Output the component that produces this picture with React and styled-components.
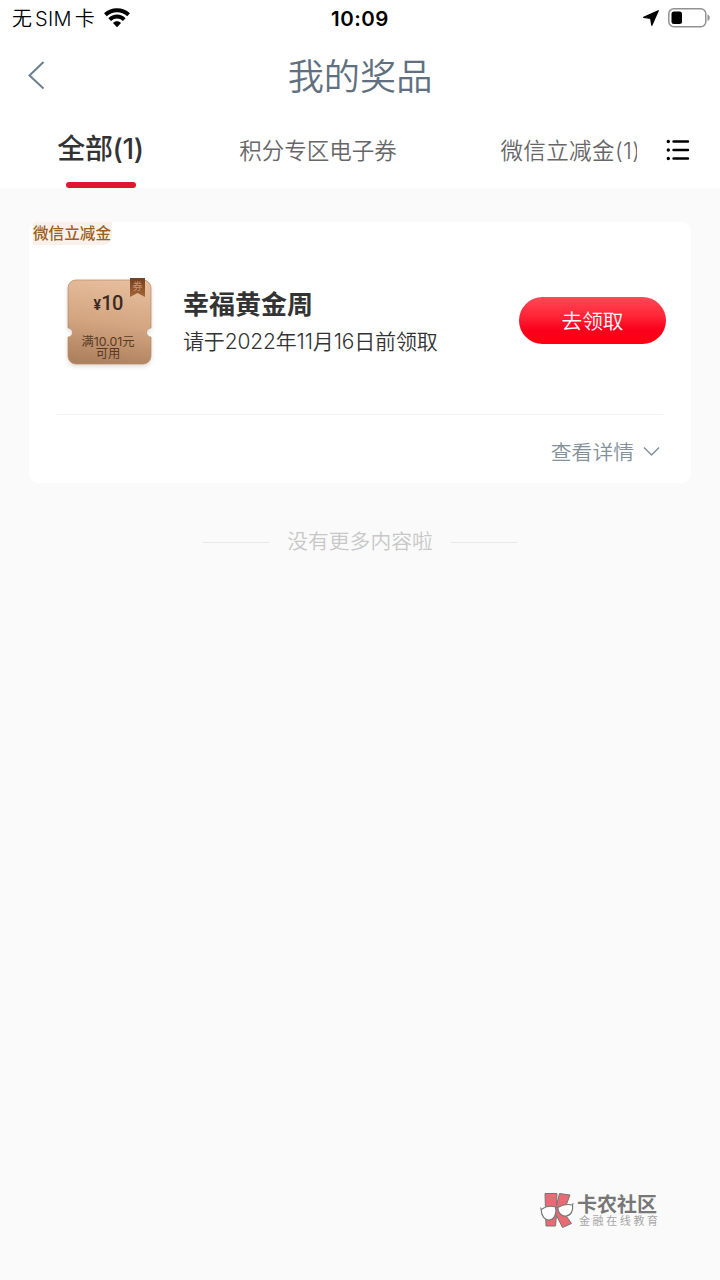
import React from "react";
import styled, { createGlobalStyle } from "styled-components";

const GlobalStyle = createGlobalStyle`
  * { box-sizing: border-box; }
  body { margin: 0; background: #fafafa; }
`;

const Screen = styled.div`
  position: relative;
  display: flex;
  flex-direction: column;
  width: 720px;
  height: 1280px;
  overflow: hidden;
  background: #fafafa;
  color: #333;
  font-family: Inter, "Noto Sans CJK SC", sans-serif;
  white-space: nowrap;
`;

const StatusBar = styled.div`
  display: grid;
  grid-template-columns: 1fr auto 1fr;
  align-items: center;
  height: 36px;
  padding: 0 10px 2px 12px;
  background: #fff;
  color: #000;
`;

const Carrier = styled.div`
  display: flex;
  align-items: center;
  gap: 9px;
  font-size: 20px;
  font-weight: 350;
  line-height: 34px;
`;

const CarrierName = styled.span`
  padding-top: 2px;
  letter-spacing: 0.25px;
  word-spacing: -3px;
`;

const Clock = styled.div`
  padding-top: 2px;
  margin-right: 2px;
  font-size: 20.5px;
  font-weight: 600;
  line-height: 32px;
  letter-spacing: 0.5px;
`;

const Indicators = styled.div`
  display: flex;
  align-items: center;
  justify-content: flex-end;
  gap: 9px;
`;

const Header = styled.header`
  display: grid;
  grid-template-columns: 90px 1fr 90px;
  align-items: center;
  height: 80px;
  background: #fff;
`;

const BackButton = styled.button`
  display: flex;
  padding: 0 0 2px 27px;
  border: 0;
  background: none;
`;

const Title = styled.h1`
  margin: 0;
  padding-top: 2px;
  text-align: center;
  color: #607080;
  font-size: 36.2px;
  font-weight: 350;
  line-height: 78px;
`;

const TabBar = styled.nav`
  display: flex;
  height: 72px;
  background: #fff;
`;

const TabList = styled.div`
  display: flex;
  width: 637px;
  overflow: hidden;
`;

const Tab = styled.div`
  display: flex;
  flex-direction: column;
  align-items: center;
  justify-content: space-between;
  flex: none;
  width: ${(p) => p.$width}px;
  color: ${(p) => (p.$active ? "#333" : "#666")};
  font-size: ${(p) => (p.$active ? 28 : 22.5)}px;
  font-weight: ${(p) => (p.$active ? 500 : 350)};
  line-height: ${(p) => (p.$active ? 66 : 70)}px;
`;

const TabLabel = styled.span`
  letter-spacing: ${(p) => p.$tracking || 0}px;
`;

const TabMarker = styled.i`
  flex: none;
  width: 70px;
  height: 6px;
  border-radius: 3px;
  background: #e0162f;
`;

const MenuButton = styled.button`
  display: flex;
  align-items: center;
  padding: 0 0 4px 29px;
  border: 0;
  background: none;
`;

const Content = styled.main`
  display: flex;
  flex-direction: column;
  padding: 34px 29px 0;
`;

const Card = styled.section`
  display: flex;
  flex-direction: column;
  height: 261px;
  border-radius: 9px;
  background: #fff;
`;

const Category = styled.div`
  align-self: flex-start;
  height: 23px;
  margin-left: 4px;
  padding-right: 1px;
  border-radius: 0 0 9px 0;
  background: #faf1eb;
  color: #9c601c;
  font-size: 15.6px;
  font-weight: 500;
  line-height: 23px;
`;

const PrizeRow = styled.div`
  display: flex;
  align-items: flex-start;
  height: 170px;
  margin: 0 28px;
  padding: 30px 0 0 7px;
  border-bottom: 1px solid #f3f3f3;
`;

const Coupon = styled.div`
  position: relative;
  flex: none;
  width: 92px;
  height: 96px;
`;

const CouponArt = styled.svg`
  position: absolute;
  inset: 0;
`;

const CouponText = styled.div`
  position: relative;
  display: flex;
  flex-direction: column;
  align-items: center;
  width: 84px;
  margin-left: 2px;
  padding-top: 16px;
`;

const Amount = styled.div`
  color: #3b2b22;
  font-family: Roboto, sans-serif;
  font-size: 20px;
  font-weight: 500;
  line-height: 24px;
  letter-spacing: -0.7px;
`;

const Currency = styled.span`
  margin-right: 1px;
  font-size: 14px;
  font-weight: 700;
`;

const Condition = styled.div`
  display: flex;
  flex-direction: column;
  align-items: center;
  margin-top: 19px;
  color: #573a26;
  font-size: 12.3px;
  line-height: 12px;
`;

const PrizeInfo = styled.div`
  flex: 1;
  padding: 11px 0 0 27px;
`;

const PrizeName = styled.h2`
  margin: 0;
  font-size: 26px;
  font-weight: 600;
  line-height: 38px;
`;

const Deadline = styled.p`
  margin: 0;
  font-size: 21px;
  font-weight: 350;
  line-height: 36px;
  letter-spacing: -0.15px;
`;

const ClaimButton = styled.button`
  width: 147px;
  height: 47px;
  margin: 22px -3px 0 0;
  padding: 0 0 2px;
  border: 0;
  border-radius: 24px;
  background: linear-gradient(#ff4856, #ff2638 40%, #fa001c 70%, #ff0010);
  color: #fff;
  font: 350 20.7px/44px "Noto Sans CJK SC", sans-serif;
`;

const Details = styled.div`
  display: flex;
  align-items: center;
  justify-content: flex-end;
  gap: 9px;
  height: 68px;
  padding: 5px 31px 0 0;
  color: #83919b;
  font-size: 20.8px;
  font-weight: 350;
`;

const DetailsLabel = styled.span`
  padding-bottom: 1px;
`;

const EndNote = styled.div`
  display: flex;
  align-items: center;
  justify-content: center;
  gap: 18px;
  margin-top: 39px;
  color: #c8c8c8;
  font-size: 20.8px;
  font-weight: 350;
  line-height: 40px;
`;

const Rule = styled.i`
  width: 66px;
  height: 1px;
  background: #e9e9e9;
`;

const Watermark = styled.div`
  position: absolute;
  left: 540px;
  top: 1190px;
  display: flex;
  gap: 1px;
`;

const WatermarkText = styled.div`
  display: flex;
  flex-direction: column;
  padding-top: 5px;
`;

const BrandName = styled.strong`
  color: #777;
  font-size: 20px;
  font-weight: 700;
  line-height: 20px;
`;

const BrandLine = styled.span`
  padding-left: 2px;
  color: #a6a6a6;
  font-size: 11px;
  line-height: 12px;
  letter-spacing: 2.6px;
`;

function WifiIcon() {
  return (
    <svg width="26" height="20" viewBox="0 0 26 20">
      <g fill="none" stroke="#000" strokeWidth="4">
        <path d="M1.400 6.800C8 .7 18 .7 24.600 6.800" />
        <path d="M5.700 11.600c4.300-4 10.300-4 14.600 0" />
      </g>
      <path d="M9 15c2.300-2.200 5.700-2.200 8 0L13 19.300z" />
    </svg>
  );
}

function LocationIcon() {
  return (
    <svg width="16" height="16" viewBox="0 0 16 16">
      <path d="M15.200.8 8.800 15.200 7.700 8.300.7 7.300z" stroke="#000" strokeWidth="1.300" strokeLinejoin="round" />
    </svg>
  );
}

function BatteryIcon() {
  return (
    <svg width="42" height="20" viewBox="0 0 42 20">
      <rect x=".8" y=".8" width="37" height="18" rx="5" fill="none" stroke="#929292" strokeWidth="1.500" />
      <rect x="3.500" y="3.500" width="10.500" height="12.500" rx="2.500" />
      <path d="M39.500 6.500c3 .7 3 5.700 0 6.400z" fill="#929292" />
    </svg>
  );
}

function CouponShape() {
  return (
    <CouponArt width="92" height="96" viewBox="0 0 92 96">
      <defs>
        <linearGradient id="copper" x1=".55" y1="0" x2=".4" y2="1">
          <stop offset="0" stopColor="#e6bd9d" />
          <stop offset=".5" stopColor="#d4a681" />
          <stop offset="1" stopColor="#ad805e" />
        </linearGradient>
        <linearGradient id="ribbon" x1="0" y1="0" x2="0" y2="1">
          <stop offset="0" stopColor="#704021" />
          <stop offset="1" stopColor="#a66635" />
        </linearGradient>
        <filter id="shade" x="-10%" y="-10%" width="120%" height="125%">
          <feDropShadow dx="0" dy="2" stdDeviation="2" floodColor="#6b4b35" floodOpacity=".22" />
        </filter>
      </defs>
      <path
        d="M13 5h66a8 8 0 0 1 8 8v40a4.500 4.500 0 0 0 0 9V81a8 8 0 0 1-8 8H12a8 8 0 0 1-8-8V62a4.500 4.500 0 0 0 0-9V13a8 8 0 0 1 8-8z"
        fill="url(#copper)"
        stroke="#b58b69"
        strokeWidth=".7"
        filter="url(#shade)"
      />
      <path d="M10 58h71" stroke="#c89b78" strokeWidth=".6" strokeDasharray="2 2" />
      <path d="M66 3h15v19l-7.500-4L66 22z" fill="url(#ribbon)" />
      <text x="73.500" y="15" textAnchor="middle" fill="#c99370" fontSize="10" fontFamily="Noto Sans CJK SC">券</text>
    </CouponArt>
  );
}

function BrandMark() {
  return (
    <svg width="36" height="40" viewBox="0 0 36 40">
      <path
        d="M5 3.500h12l-.5 12L19.500 3.500l10.500 1.500-6.500 17 8 11.500-9 4-6-12-1 10.500H6z"
        fill="#e76a74"
        stroke="#777"
        strokeWidth="1"
        strokeLinejoin="round"
      />
      <g fill="#fff" stroke="#777" strokeWidth="1.200">
        <path d="M1.200 19.500C5 16.500 11 15.500 15.500 17c1.800 6-1 12.500-6.500 13-4.500.3-7.800-4.500-7.800-10.500z" />
        <path d="M17.800 17.500c4-2.500 10-3.500 14.700-2.500 1 5.500-1.500 10.500-6.500 11-4.500.4-8-3-8.200-8.500z" />
      </g>
      <path d="M15.500 18q1.200-1.500 2.500-.5M1.200 19.500.6 17.500M32.500 15l.8-2" fill="none" stroke="#777" />
    </svg>
  );
}

export default function App() {
  return (
    <Screen>
      <GlobalStyle />
      <StatusBar>
        <Carrier>
          <CarrierName>无 SIM 卡</CarrierName>
          <WifiIcon />
        </Carrier>
        <Clock>10:09</Clock>
        <Indicators>
          <LocationIcon />
          <BatteryIcon />
        </Indicators>
      </StatusBar>
      <Header>
        <BackButton aria-label="返回">
          <svg width="18" height="30" viewBox="0 0 18 30" fill="none" stroke="#688092" strokeWidth="2">
            <path d="M16.500 2 2.500 15.500l14 13" />
          </svg>
        </BackButton>
        <Title>我的奖品</Title>
      </Header>
      <TabBar>
        <TabList>
          <Tab $active $width={201}>
            <TabLabel $tracking={-0.4}>全部(1)</TabLabel>
            <TabMarker />
          </Tab>
          <Tab $width={234}>
            <TabLabel>积分专区电子券</TabLabel>
          </Tab>
          <Tab $width={271}>
            <TabLabel $tracking={0.4}>微信立减金(1)</TabLabel>
          </Tab>
        </TabList>
        <MenuButton aria-label="菜单">
          <svg width="24" height="22" viewBox="0 0 24 22" stroke="#000" strokeWidth="2.400" strokeLinecap="round">
            <path d="M7.500 2.500h14.500M7.500 11h14.500M7.500 19.500h14.500" />
            <path d="M2.300 2.500h.01M2.300 11h.01M2.300 19.500h.01" strokeWidth="3.400" />
          </svg>
        </MenuButton>
      </TabBar>
      <Content>
        <Card>
          <Category>微信立减金</Category>
          <PrizeRow>
            <Coupon>
              <CouponShape />
              <CouponText>
                <Amount><Currency>¥</Currency>10</Amount>
                <Condition>
                  <span>满10.01元</span>
                  <span>可用</span>
                </Condition>
              </CouponText>
            </Coupon>
            <PrizeInfo>
              <PrizeName>幸福黄金周</PrizeName>
              <Deadline>请于2022年11月16日前领取</Deadline>
            </PrizeInfo>
            <ClaimButton>去领取</ClaimButton>
          </PrizeRow>
          <Details>
            <DetailsLabel>查看详情</DetailsLabel>
            <svg width="17" height="11" viewBox="0 0 17 11" fill="none" stroke="#83919b" strokeWidth="1.500">
              <path d="m1 1.500 7.500 7.500L16 1.500" />
            </svg>
          </Details>
        </Card>
        <EndNote>
          <Rule />
          没有更多内容啦
          <Rule />
        </EndNote>
      </Content>
      <Watermark>
        <BrandMark />
        <WatermarkText>
          <BrandName>卡农社区</BrandName>
          <BrandLine>金融在线教育</BrandLine>
        </WatermarkText>
      </Watermark>
    </Screen>
  );
}
